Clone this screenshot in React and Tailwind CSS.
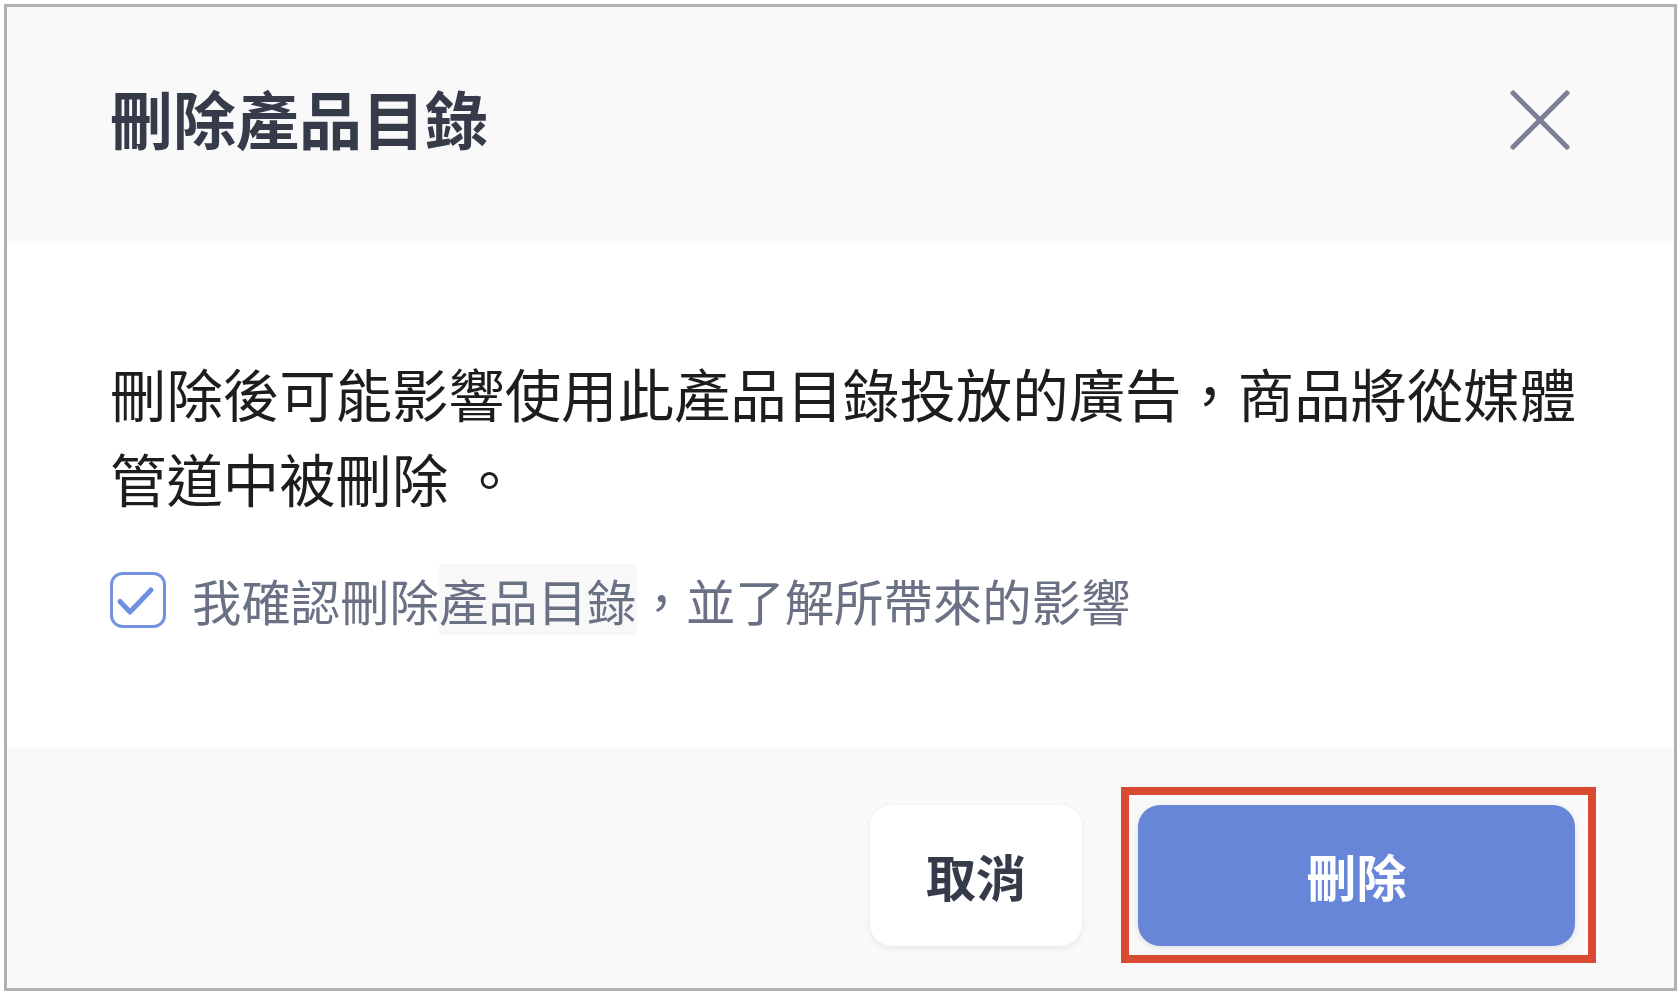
import React, { useState } from 'react';

const FONT = "font-['Noto_Sans_CJK_TC','Noto_Sans',sans-serif]";

const CloseIcon = () => (
  <svg width="60" height="60" viewBox="0 0 60 60" fill="none">
    <path d="M3 3L57 57M57 3L3 57" stroke="#7a8194" strokeWidth="5" strokeLinecap="round" />
  </svg>
);

const CheckBox = ({ checked, onChange }) => (
  <button type="button" onClick={onChange} className="shrink-0">
    <svg width="56" height="56" viewBox="0 0 56 56" fill="none">
      <rect x="1.5" y="1.5" width="53" height="53" rx="11" stroke="#7393e1" strokeWidth="3" fill="white" />
      {checked && (
        <path
          d="M10 29.5L20 40L41 18"
          stroke="#6f8fe0"
          strokeWidth="5"
          strokeLinecap="round"
          strokeLinejoin="round"
        />
      )}
    </svg>
  </button>
);

const DeleteCatalogDialog = () => {
  const [confirmed, setConfirmed] = useState(true);

  return (
    <div className="border-[3px] border-[#b1b1b1] w-[1673px] flex flex-col">
      {/* Header */}
      <div className="h-[234px] bg-[#f9f9fa] flex items-center justify-between pl-[103px] pr-[104px] pb-[14px]">
        <h2 className="text-[63px] leading-[1.45] font-bold text-[#363b4a]">刪除產品目錄</h2>
        <button type="button" className="mt-[6px]">
          <CloseIcon />
        </button>
      </div>

      {/* Body */}
      <div className="h-[507px] bg-white pl-[103px] pt-[109px]">
        <p className="w-[1490px] text-[56.4px] leading-[85px] text-[#1d1d1f]">
          刪除後可能影響使用此產品目錄投放的廣告，商品將從媒體管道中被刪除 。
        </p>
        <label className="mt-[44px] flex items-center gap-[26px]">
          <CheckBox checked={confirmed} onChange={() => setConfirmed(!confirmed)} />
          <span className="text-[49.4px] leading-[72px] text-[#6b7185]">
            我確認刪除<span className="bg-[#f8f8f9]">產品目錄</span>，並了解所帶來的影響
          </span>
        </label>
      </div>

      {/* Footer */}
      <div className="h-[240px] bg-[#f9f9f9] flex justify-end items-start gap-[56px] pt-[57px] pr-[99px]">
        <button
          type="button"
          className="w-[212px] h-[141px] rounded-[22px] bg-white shadow-[0_2px_6px_rgba(0,0,0,0.08)] text-[50px] font-bold text-[#363b4a]"
        >
          取消
        </button>
        <div className="relative">
          <button
            type="button"
            disabled={!confirmed}
            className="w-[437px] h-[141px] rounded-[22px] bg-[#6886d8] shadow-[0_2px_6px_rgba(0,0,0,0.1)] text-[50px] font-bold text-white"
          >
            刪除
          </button>
          {/* highlight frame around the primary action */}
          <div className="absolute -left-[17px] -right-[21px] -top-[18px] -bottom-[17px] border-[8px] border-[#d84a31] pointer-events-none" />
        </div>
      </div>
    </div>
  );
};

export default function App() {
  return (
    <div className={`min-h-screen bg-white p-[4px] ${FONT}`}>
      <DeleteCatalogDialog />
    </div>
  );
}
